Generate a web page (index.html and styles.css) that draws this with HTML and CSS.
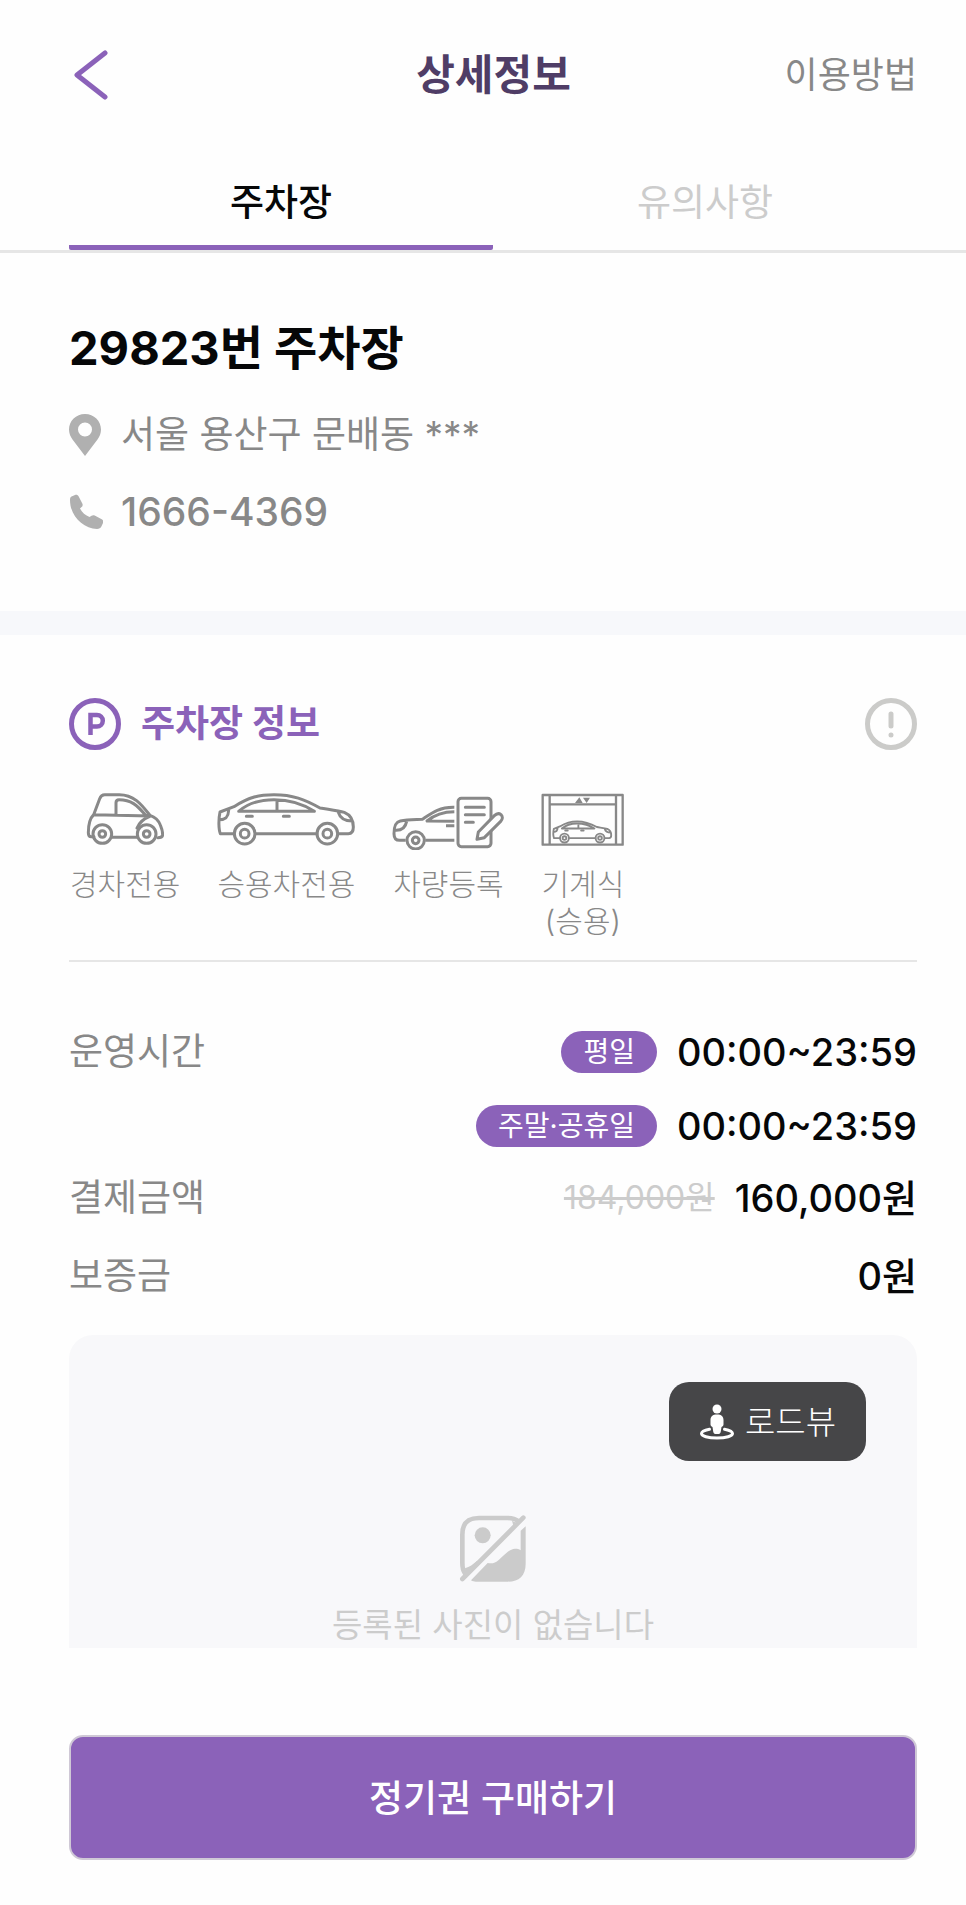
FILE: index.html
```html
<!DOCTYPE html>
<html lang="ko">
  <head>
    <title>상세정보</title>
    <meta charset="utf-8" />
    <meta name="viewport" content="width=device-width, initial-scale=1" />
    <link rel="stylesheet" href="styles.css">
  </head>
  <body>
    <header class="header">
      <button class="back-button" type="button" aria-label="뒤로">
        <svg width="38" height="54" viewBox="0 0 38 54" fill="none" stroke="#8b62b9" stroke-width="5" stroke-linecap="round" stroke-linejoin="round">
          <path d="M35 5 7 27l28 22" />
        </svg>
      </button>
      <h1>상세정보</h1>
      <a href="#guide" class="guide-link">이용방법</a>
    </header>
    <nav class="tabs">
      <a href="#parking" class="tab active">주차장</a>
      <a href="#notice" class="tab">유의사항</a>
    </nav>
    <main>
      <section class="summary" id="parking">
        <h2>29823번 주차장</h2>
        <p class="contact">
          <svg width="34" height="44" viewBox="0 0 34 44" fill="#b0b0b0">
            <path fill-rule="evenodd" d="M16 1C7 1 0 8 0 16.500c0 4 1.500 7 3.500 10L16 43l12.500-16.500c2-3 3.500-6 3.500-10C32 8 25 1 16 1zm0 8.500a7 7 0 1 1 0 14 7 7 0 0 1 0-14z" />
          </svg>
          <span>서울 용산구 문배동 ***</span>
        </p>
        <p class="contact phone">
          <svg width="34" height="44" viewBox="0 0 34 44" fill="#b0b0b0">
            <path d="M2.500 6.500 6 5c1.500-.6 3 0 3.700 1.400l3.600 7c.7 1.400.4 2.800-.7 3.700l-1.600 1.400c2 4 5.500 7 9.500 8.500l2-1.300c1-.7 2.200-.7 3.200-.2l7 3.700c1.500.8 2 2.300 1.300 3.800l-1.500 3.300c-.8 1.700-2.400 2.700-4.500 2.700C14 38.500 1 26 1 10c0-1.600.4-3 1.500-3.500z" />
          </svg>
          <span>1666-4369</span>
        </p>
      </section>
      <section class="info">
        <div class="info-head">
          <svg width="52" height="52" viewBox="0 0 52 52" fill="none" stroke="#8b62b9" stroke-width="5">
            <circle cx="26" cy="26" r="23.500" />
            <path d="M21.500 37V17h6.500a5.800 5.800 0 0 1 0 11.600h-6.500" stroke-width="4.500" />
          </svg>
          <h3>주차장 정보</h3>
          <button class="help-button" type="button" aria-label="안내">
            <svg width="52" height="52" viewBox="0 0 52 52" fill="none" stroke="#cbcbc9" stroke-width="5" stroke-linecap="round">
              <circle cx="26" cy="26" r="23.500" />
              <path d="M26 16v12M26 37v.1" />
            </svg>
          </button>
        </div>
        <ul class="features">
          <li>
            <svg width="78" height="60" viewBox="109 330 234 180">
              <path d="M133 470h-8c-6 0-9-5-9-12 0-25 4-42 16-54l18-48c3-8 7-12 15-12h44c45 0 68 32 92 62 15 5 26 16 31 29 5 12 7 22 7 30-1 6-6 8-14 8M186 472h76M132 404l170 4c-20 8-34 22-40 36M199 404v-36c0-6 3-9 9-9 36 0 54 16 80 47" />
              <circle cx="158" cy="462" r="28" />
              <circle cx="158" cy="462" r="10" />
              <circle cx="291" cy="462" r="28" />
              <circle cx="291" cy="462" r="10" />
            </svg>
            <span>경차전용</span>
          </li>
          <li>
            <svg width="138" height="60" viewBox="504 330 414 180">
              <g id="sedan">
                <path d="M556 461h-42c-5-12-6-42-1-65l42-16c46-29 76-36 120-36 56 0 92 14 138 40 30 5 55 8 73 13 19 8 27 24 27 44 0 13-5 20-15 20h-31M619 461h185M569 394c30-26 64-35 106-35 46 0 85 11 121 35zM684 360v34M511 419c20 0 27-8 28-28M868 397c5 17 16 26 42 26M592 409h18M703 409h18" />
                <circle cx="587" cy="461" r="31" />
                <circle cx="587" cy="461" r="13" />
                <circle cx="835" cy="461" r="31" />
                <circle cx="835" cy="461" r="13" />
              </g>
            </svg>
            <span>승용차전용</span>
          </li>
          <li>
            <svg width="112" height="60" viewBox="70 60 336 180">
              <path d="M111 211H93c-12 0-17-8-17-20 0-26 6-35 19-38 22-5 44-4 66-5 28-19 50-37 96-36M257 125c-32 0-56 6-82 28l82 1M257 167h-25M257 211h-87M80 181c18 1 30-7 34-27" class="flat" />
              <circle cx="141" cy="211" r="26" />
              <circle cx="141" cy="211" r="10" />
              <rect x="268" y="85" width="99" height="145" rx="10" />
              <path d="M290 112h57M290 134h57M290 157h24" />
              <path class="pencil" d="M325 208l4-22 48-49c6-6 14-8 20-3 6 6 5 14-1 20l-49 49z" />
            </svg>
            <span>차량등록</span>
          </li>
          <li>
            <svg width="83" height="60" viewBox="507 60 249 180">
              <path d="M512 75h240v149H512zM533 75v149M732 75v149M533 103h199" class="thin" />
              <path d="M609 99l13-17 10 17zM633 83h21l-10 16z" class="arrow" />
              <use href="#sedan" class="lifted" transform="translate(325 6) scale(.43)" />
            </svg>
            <span>기계식<br>(승용)</span>
          </li>
        </ul>
        <dl class="details">
          <div class="detail">
            <dt>운영시간</dt>
            <dd class="hours">
              <div class="value"><span class="badge">평일</span>00:00~23:59</div>
              <div class="value"><span class="badge">주말·공휴일</span>00:00~23:59</div>
            </dd>
          </div>
          <div class="detail price">
            <dt>결제금액</dt>
            <dd class="value"><del>184,000원</del>160,000원</dd>
          </div>
          <div class="detail deposit">
            <dt>보증금</dt>
            <dd class="value">0원</dd>
          </div>
        </dl>
        <div class="photo">
          <button class="roadview" type="button">
            <svg width="36" height="36" viewBox="0 0 36 36" fill="#fff">
              <circle cx="18" cy="5" r="4.500" />
              <path d="M18 10.500c4.500 0 6.500 2 6.500 5.500v4.500c0 1.300-.8 2-2 2.500l-.8 5c-.3 1.300-1 2-2 2h-3.400c-1 0-1.700-.7-2-2l-.8-5c-1.200-.5-2-1.200-2-2.500V16c0-3.500 2-5.500 6.500-5.500z" />
              <path d="M10.500 25.200C5 26.300 2.500 28 2.500 29.500 2.500 32 9 34 18 34s15.500-2 15.500-4.500c0-1.500-2.500-3.200-8-4.300" fill="none" stroke="#fff" stroke-width="3" stroke-linecap="round" />
            </svg>
            로드뷰
          </button>
          <svg class="no-photo" width="70" height="70" viewBox="478 72 210 210" fill="none" stroke="#cbcbcb" stroke-width="14" stroke-linecap="round">
            <path d="M499 250c-7-10-8-20-8-32v-84c0-34 16-50 50-50h86c14 0 24 3 33 10" />
            <path d="M674 83 491 267" />
            <path d="M499 235c14-4 24-12 36-22l10 8-44 38zM640 92l20 10-14 12z" fill="#cbcbcb" stroke="none" />
            <circle cx="552" cy="136" r="24" fill="#cbcbcb" stroke="none" />
            <path d="M517 271l50-52c14 3 22 0 34-10 20-18 32-32 48-33 7 0 12 1 17 5v-59l15-13v112c0 36-20 54-54 54H532c-6 0-10-1-15-4z" fill="#cbcbcb" stroke="none" />
          </svg>
          <p>등록된 사진이 없습니다</p>
        </div>
      </section>
    </main>
    <footer class="footer">
      <button class="buy-button" type="button">정기권 구매하기</button>
    </footer>
  </body>
</html>
```
FILE: styles.css
```css
* {
  box-sizing: border-box;
}

body {
  margin: 0;
  background: #fefefe;
  color: #060708;
  font-family: Inter, "Noto Sans CJK KR", sans-serif;
  font-size: 37px;
  line-height: 50px;
}

h1,
h2,
h3,
p,
ul,
dl,
dd {
  margin: 0;
  padding: 0;
}

button {
  padding: 0;
  border: 0;
  background: none;
  font: inherit;
  cursor: pointer;
}

a {
  color: inherit;
  text-decoration: none;
}

svg {
  display: block;
  flex-shrink: 0;
}

.header {
  display: grid;
  grid-template-columns: 1fr auto 1fr;
  align-items: center;
  height: 150px;
  padding: 0 49px 0 70px;
}

.back-button {
  justify-self: start;
}

.header h1 {
  color: #4f3d66;
  font-size: 42px;
  font-weight: 700;
}

.guide-link {
  justify-self: end;
  color: #888;
  font-size: 36px;
}

.tabs {
  display: flex;
  padding: 0 49px 0 69px;
  border-bottom: 3px solid #e6e6e6;
}

.tab {
  flex: 1;
  height: 100px;
  color: #ccc;
  line-height: 106px;
  text-align: center;
}

.tab.active {
  border-bottom: 5px solid #8b62b9;
  border-radius: 2px;
  color: #060708;
  font-weight: 500;
}

.summary {
  padding: 60px 49px 74px 69px;
  border-bottom: 24px solid #f7f8fb;
}

.summary h2 {
  font-size: 47px;
  font-weight: 700;
  line-height: 70px;
}

.contact {
  display: flex;
  align-items: center;
  gap: 18px;
  margin-top: 27px;
  color: #888;
}

.phone {
  font-size: 39px;
  font-weight: 500;
}

.info {
  padding: 63px 49px 0 69px;
}

.info-head {
  display: flex;
  align-items: center;
  gap: 20px;
}

.info-head h3 {
  color: #8b62b9;
  font-size: 37px;
  font-weight: 700;
}

.help-button {
  margin-left: auto;
}

.features {
  display: flex;
  gap: 37px;
  margin-top: 40px;
  padding-bottom: 20px;
  padding-left: 1px;
  border-bottom: 2px solid #e6e6e6;
  list-style: none;
}

.features li {
  display: flex;
  flex-direction: column;
  align-items: center;
  gap: 16px;
  color: #888;
  font-size: 30px;
  font-weight: 300;
  line-height: 37px;
  text-align: center;
}

.features svg {
  fill: none;
  stroke: #888;
  stroke-width: 9;
  stroke-linecap: round;
  stroke-linejoin: round;
}

.features .flat {
  stroke-linecap: butt;
}

.features .thin {
  stroke-width: 7;
}

.features .lifted {
  stroke-width: 13;
}

.features .arrow {
  fill: #888;
  stroke: none;
}

.features .pencil {
  fill: #fefefe;
}

.details {
  padding-top: 65px;
}

.detail {
  display: flex;
  justify-content: space-between;
}

.detail dt {
  color: #888;
}

.hours {
  display: grid;
  gap: 24px;
}

.price {
  margin-top: 22px;
}

.deposit {
  margin-top: 28px;
}

.value {
  display: flex;
  justify-content: flex-end;
  align-items: center;
  gap: 20px;
  font-size: 38px;
  font-weight: 500;
}

.value del {
  color: #ccc;
  font-size: 32px;
  font-weight: 400;
}

.badge {
  padding: 0 22px;
  border-radius: 21px;
  background: #8b62b9;
  color: #fff;
  font-size: 28px;
  font-weight: 400;
  line-height: 42px;
}

.photo {
  display: flex;
  flex-direction: column;
  align-items: center;
  margin-top: 34px;
  padding: 47px 51px 0;
  border-radius: 24px 24px 0 0;
  background: #f8f8fa;
  color: #ccc;
  font-size: 33px;
  line-height: 46px;
}

.roadview {
  display: flex;
  align-items: center;
  align-self: flex-end;
  gap: 10px;
  height: 79px;
  padding: 0 30px;
  border-radius: 20px;
  background: #464648;
  color: #fff;
  font-size: 33px;
  font-weight: 300;
}

.no-photo {
  margin-top: 53px;
  margin-bottom: 18px;
}

.footer {
  padding: 87px 49px 45px 69px;
}

.buy-button {
  width: 100%;
  height: 125px;
  padding-top: 3px;
  border: 2px solid #cfc8d6;
  border-radius: 14px;
  background: #8b62b9;
  color: #fff;
  font-weight: 500;
}
```
